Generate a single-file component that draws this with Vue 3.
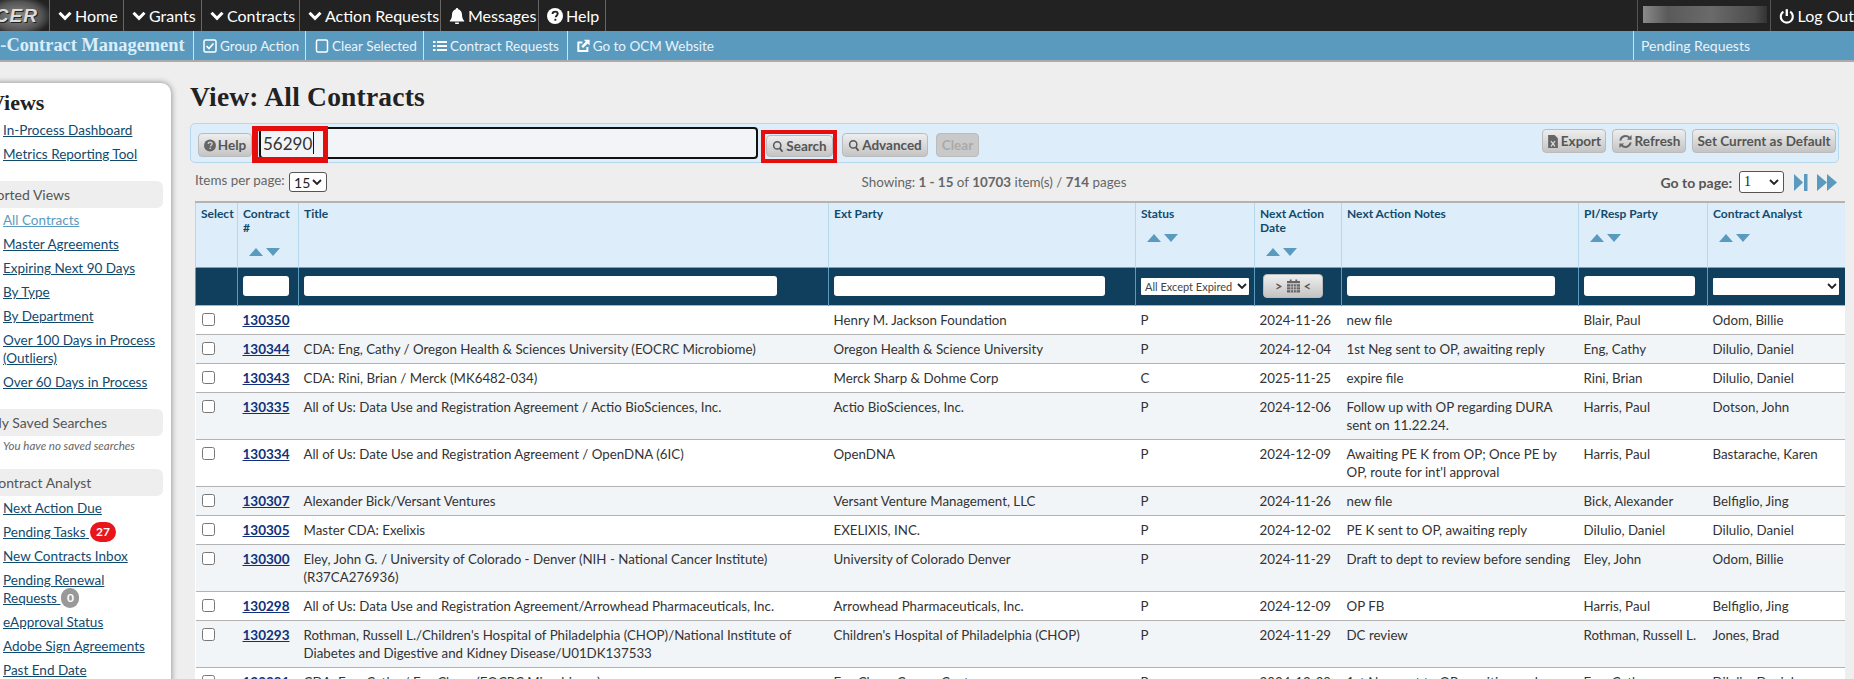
<script setup>
const navItems = [
  { label: 'Home', icon: 'chev', w: 74 },
  { label: 'Grants', icon: 'chev', w: 78 },
  { label: 'Contracts', icon: 'chev', w: 98 },
  { label: 'Action Requests', icon: 'chev', w: 141 },
  { label: 'Messages', icon: 'bell', w: 98 },
  { label: 'Help', icon: 'help', w: 67 }
]
const subItems = [
  { label: 'Group Action', icon: 'check', w: 112 },
  { label: 'Clear Selected', icon: 'square', w: 118 },
  { label: 'Contract Requests', icon: 'list', w: 144 },
  { label: 'Go to OCM Website', icon: 'ext', w: 147 }
]
const sideGroups = [
  { links: [{ t: 'In-Process Dashboard' }, { t: 'Metrics Reporting Tool' }] },
  {
    head: 'Sorted Views',
    links: [
      { t: 'All Contracts', active: true },
      { t: 'Master Agreements' },
      { t: 'Expiring Next 90 Days' },
      { t: 'By Type' },
      { t: 'By Department' },
      { t: 'Over 100 Days in Process (Outliers)' },
      { t: 'Over 60 Days in Process' }
    ]
  },
  { head: 'My Saved Searches', note: 'You have no saved searches', links: [] },
  {
    head: 'Contract Analyst',
    links: [
      { t: 'Next Action Due' },
      { t: 'Pending Tasks', badge: '27', red: true },
      { t: 'New Contracts Inbox' },
      { t: 'Pending Renewal Requests', badge: '0' },
      { t: 'eApproval Status' },
      { t: 'Adobe Sign Agreements' },
      { t: 'Past End Date' }
    ]
  }
]
const columns = [
  { t: 'Select', w: 42 },
  { t: 'Contract #', w: 61, sort: true, filter: 'contract' },
  { t: 'Title', w: 530, filter: 'title' },
  { t: 'Ext Party', w: 307, filter: 'party' },
  { t: 'Status', w: 119, sort: true, filter: 'status' },
  { t: 'Next Action Date', w: 87, sort: true, filter: 'date' },
  { t: 'Next Action Notes', w: 237, filter: 'notes' },
  { t: 'PI/Resp Party', w: 129, sort: true, filter: 'pi' },
  { t: 'Contract Analyst', w: 137, sort: true, filter: 'analyst' }
]
const rows = [
  ['130350', '', 'Henry M. Jackson Foundation', 'P', '2024-11-26', 'new file', 'Blair, Paul', 'Odom, Billie'],
  ['130344', 'CDA: Eng, Cathy / Oregon Health & Sciences University (EOCRC Microbiome)', 'Oregon Health & Science University', 'P', '2024-12-04', '1st Neg sent to OP, awaiting reply', 'Eng, Cathy', 'Dilulio, Daniel'],
  ['130343', 'CDA: Rini, Brian / Merck (MK6482-034)', 'Merck Sharp & Dohme Corp', 'C', '2025-11-25', 'expire file', 'Rini, Brian', 'Dilulio, Daniel'],
  ['130335', 'All of Us: Data Use and Registration Agreement / Actio BioSciences, Inc.', 'Actio BioSciences, Inc.', 'P', '2024-12-06', 'Follow up with OP regarding DURA sent on 11.22.24.', 'Harris, Paul', 'Dotson, John'],
  ['130334', 'All of Us: Date Use and Registration Agreement / OpenDNA (6IC)', 'OpenDNA', 'P', '2024-12-09', "Awaiting PE K from OP; Once PE by OP, route for int'l approval", 'Harris, Paul', 'Bastarache, Karen'],
  ['130307', 'Alexander Bick/Versant Ventures', 'Versant Venture Management, LLC', 'P', '2024-11-26', 'new file', 'Bick, Alexander', 'Belfiglio, Jing'],
  ['130305', 'Master CDA: Exelixis', 'EXELIXIS, INC.', 'P', '2024-12-02', 'PE K sent to OP, awaiting reply', 'DiIulio, Daniel', 'Dilulio, Daniel'],
  ['130300', 'Eley, John G. / University of Colorado - Denver (NIH - National Cancer Institute) (R37CA276936)', 'University of Colorado Denver', 'P', '2024-11-29', 'Draft to dept to review before sending', 'Eley, John', 'Odom, Billie'],
  ['130298', 'All of Us: Data Use and Registration Agreement/Arrowhead Pharmaceuticals, Inc.', 'Arrowhead Pharmaceuticals, Inc.', 'P', '2024-12-09', 'OP FB', 'Harris, Paul', 'Belfiglio, Jing'],
  ['130293', "Rothman, Russell L./Children's Hospital of Philadelphia (CHOP)/National Institute of Diabetes and Digestive and Kidney Disease/U01DK137533", "Children's Hospital of Philadelphia (CHOP)", 'P', '2024-11-29', 'DC review', 'Rothman, Russell L.', 'Jones, Brad'],
  ['130291', 'CDA: Eng, Cathy / Fox Chase (EOCRC Microbiome)', 'Fox Chase Cancer Center', 'P', '2024-12-09', '1st Neg sent to OP, awaiting reply', 'Eng, Cathy', 'Dilulio, Daniel']
]
</script>

<template>
  <div class="app">
    <header class="topbar">
      <div class="logo"><span class="logo-text">ICER</span></div>
      <a v-for="n in navItems" :key="n.label" class="nav" :style="{ width: n.w + 'px' }">
        <svg v-if="n.icon === 'chev'" class="ic-chev" viewBox="0 0 14 10"><path d="M1.500 1.800 7 7.300l5.500-5.500" fill="none" stroke="#fff" stroke-width="3"/></svg>
        <svg v-else-if="n.icon === 'bell'" class="ic" viewBox="0 0 16 16"><path d="M8 0a1.200 1.200 0 0 1 1.200 1.300C11.600 1.900 13 4 13 6.500c0 3.500 1 5 2.200 6.300v.7H.8v-.7C2 11.500 3 10 3 6.500 3 4 4.400 1.900 6.800 1.300A1.200 1.200 0 0 1 8 0zM6 14.500h4a2 2 0 0 1-4 0z" fill="#fff"/></svg>
        <svg v-else class="ic" viewBox="0 0 16 16"><circle cx="8" cy="8" r="8" fill="#fff"/><path d="M5.500 6c.1-1.500 1.200-2.400 2.600-2.400 1.500 0 2.600.9 2.600 2.200 0 1.800-2 1.900-2 3.400" fill="none" stroke="#222" stroke-width="1.900"/><rect x="7.400" y="10.800" width="1.900" height="1.900" fill="#222"/></svg>
        {{ n.label }}
      </a>
      <div class="user"><span class="blur"></span></div>
      <a class="nav logout">
        <svg class="ic" viewBox="0 0 16 16"><path d="M4.500 3.500a6.200 6.200 0 1 0 7 0" fill="none" stroke="#fff" stroke-width="2.200"/><path d="M8 1v7" stroke="#fff" stroke-width="2.400"/></svg>
        Log Out
      </a>
    </header>

    <nav class="subbar">
      <div class="brand">E-Contract Management</div>
      <a v-for="s in subItems" :key="s.label" class="sub" :style="{ width: s.w + 'px' }">
        <svg v-if="s.icon === 'check'" class="ic-s" viewBox="0 0 14 14"><rect x="1" y="1" width="12" height="12" rx="1.500" fill="none" stroke="#fff" stroke-width="1.500"/><path d="M3.500 7 6 9.500l4.500-5" fill="none" stroke="#fff" stroke-width="1.700"/></svg>
        <svg v-else-if="s.icon === 'square'" class="ic-s" viewBox="0 0 14 14"><rect x="1.500" y="1" width="11" height="12" rx="1.500" fill="none" stroke="#fff" stroke-width="1.500"/></svg>
        <svg v-else-if="s.icon === 'list'" class="ic-s" viewBox="0 0 14 14"><path d="M0 2h2.500v2H0zM0 6h2.500v2H0zM0 10h2.500v2H0zM4 2h10v2H4zM4 6h10v2H4zM4 10h10v2H4z" fill="#fff"/></svg>
        <svg v-else class="ic-s" viewBox="0 0 14 14"><path d="M11.500 8v4.500H1.500V3H6" fill="none" stroke="#fff" stroke-width="2.200"/><path d="M7.500 0H14v6.500l-2.200-2.200-5 5L4.700 7.200l5-5z" fill="#fff"/></svg>
        {{ s.label }}
      </a>
      <div class="sub pending">Pending Requests</div>
    </nav>

    <div class="page">
      <aside class="side">
        <h2 class="side-title">Views</h2>
        <section v-for="(g, i) in sideGroups" :key="i" class="side-group">
          <div v-if="g.head" class="side-head">{{ g.head }}</div>
          <div v-if="g.note" class="side-note">{{ g.note }}</div>
          <div v-for="l in g.links" :key="l.t" class="side-link">
            <a :class="{ active: l.active }">{{ l.t }}<template v-if="l.badge">&nbsp;</template></a><span v-if="l.badge" class="badge" :class="{ red: l.red }">{{ l.badge }}</span>
          </div>
        </section>
      </aside>

      <main class="main">
        <h1 class="title">View: All Contracts</h1>

        <div class="panel">
          <button class="btn help">
            <svg class="ic-b" viewBox="0 0 16 16"><circle cx="8" cy="8" r="8" fill="#666"/><path d="M5.500 6c.1-1.500 1.200-2.400 2.600-2.400 1.500 0 2.600.9 2.600 2.200 0 1.800-2 1.900-2 3.400" fill="none" stroke="#ccc" stroke-width="1.900"/><rect x="7.400" y="10.800" width="1.900" height="1.900" fill="#ccc"/></svg>
            Help
          </button>
          <div class="search-box">
            <div class="search-input"><span>56290</span><i class="caret"></i></div>
            <span class="mark"></span>
          </div>
          <div class="search-mark">
            <button class="btn">
              <svg class="ic-b" viewBox="0 0 16 16"><circle cx="7" cy="6.500" r="4.800" fill="none" stroke="#555" stroke-width="2"/><path d="m10.500 10.500 3.500 4.500" stroke="#555" stroke-width="2.400"/></svg>
              Search
            </button>
          </div>
          <button class="btn adv">
            <svg class="ic-b" viewBox="0 0 16 16"><circle cx="7" cy="6.500" r="4.800" fill="none" stroke="#555" stroke-width="2"/><path d="m10.500 10.500 3.500 4.500" stroke="#555" stroke-width="2.400"/></svg>
            Advanced
          </button>
          <button class="btn clear">Clear</button>
          <div class="panel-right">
            <button class="btn">
              <svg class="ic-b" viewBox="0 0 14 16"><path d="M1 0h8l4 4v12H1z" fill="#666"/><path d="M4.500 7.500 9.500 14M9.500 7.500l-5 6.500" stroke="#ddd" stroke-width="1.500"/></svg>
              Export
            </button>
            <button class="btn">
              <svg class="ic-b wide" viewBox="0 0 16 16"><path d="M2.500 7a5.600 5.600 0 0 1 9.700-3M13.500 9a5.600 5.600 0 0 1-9.700 3" fill="none" stroke="#666" stroke-width="2"/><path d="M14.500 1v5h-5zM1.500 15v-5h5z" fill="#666"/></svg>
              Refresh
            </button>
            <button class="btn">Set Current as Default</button>
          </div>
        </div>

        <div class="pager">
          <div class="pp">Items per page: <span class="sel sel-15">15<svg class="car" viewBox="0 0 10 6"><path d="M1 1l4 4 4-4" fill="none" stroke="#222" stroke-width="1.800"/></svg></span></div>
          <div class="showing">Showing: <b>1 - 15</b> of <b>10703</b> item(s) / <b>714</b> pages</div>
          <div class="goto">
            <b>Go to page:</b>
            <span class="sel sel-1">1<svg class="car" viewBox="0 0 10 6"><path d="M1 1l4 4 4-4" fill="none" stroke="#222" stroke-width="1.800"/></svg></span>
            <svg class="step" viewBox="0 0 14 17"><path d="M0 0l9 8.500-9 8.500zM10 0h3.500v17H10z" fill="#5b9abf"/></svg>
            <svg class="fast" viewBox="0 0 20 17"><path d="M0 0l10 8.500L0 17zM10 0l10 8.500L10 17z" fill="#5b9abf"/></svg>
          </div>
        </div>

        <table class="grid">
          <colgroup><col v-for="c in columns" :key="c.t" :style="{ width: c.w + 'px' }"></colgroup>
          <thead>
            <tr class="head-row">
              <th v-for="c in columns" :key="c.t">
                <div>{{ c.t }}</div>
                <div v-if="c.sort" class="sorts"><i class="up"></i><i class="down"></i></div>
              </th>
            </tr>
            <tr class="filter-row">
              <th v-for="c in columns" :key="c.t" :class="{ pad: c.filter }">
                <input v-if="['contract','title','party','notes','pi'].includes(c.filter)" class="f-input" :class="'f-' + c.filter" type="text">
                <span v-else-if="c.filter === 'status'" class="f-sel">All Except Expired<svg class="car" viewBox="0 0 10 6"><path d="M1 1l4 4 4-4" fill="none" stroke="#222" stroke-width="1.800"/></svg></span>
                <button v-else-if="c.filter === 'date'" class="f-date">&gt;
                  <svg class="cal" viewBox="0 0 14 14"><path d="M0 5h14v9H0zM0 1.500h3V0h2v1.500h4V0h2v1.500h3V4H0z" fill="#666"/><path d="M0 8h14M0 11h14M4 5v9M7 5v9M10 5v9" stroke="#ddd" stroke-width=".7"/></svg>
                  &lt;</button>
                <span v-else-if="c.filter === 'analyst'" class="f-sel f-an"><svg class="car" viewBox="0 0 10 6"><path d="M1 1l4 4 4-4" fill="none" stroke="#222" stroke-width="1.800"/></svg></span>
              </th>
            </tr>
          </thead>
          <tbody>
            <tr v-for="r in rows" :key="r[0]">
              <td><input class="cb" type="checkbox"></td>
              <td><a class="cid">{{ r[0] }}</a></td>
              <td v-for="(v, j) in r.slice(1)" :key="j">{{ v }}</td>
            </tr>
          </tbody>
        </table>
      </main>
    </div>
  </div>
</template>

<style>
html, body { margin: 0; height: 679px; overflow: hidden; background: #eee; }
</style>

<style scoped>
.app { font-family: "Lato", "Liberation Sans", sans-serif; font-size: 14px; color: #333; }
.topbar { display: flex; height: 31px; background: #222; color: #fff; }
.logo { display: flex; justify-content: flex-end; width: 50px; flex: none; overflow: hidden; padding-right: 11px; background: radial-gradient(ellipse 34px 20px at 18px 16px, #8c8c8c, #555 70%, #222 100%); border-right: 1px solid #666; box-sizing: border-box; white-space: nowrap; }
.logo-text { flex: none; font: italic bold 19px/32px "Liberation Sans", sans-serif; color: #dcdcdc; letter-spacing: 1px; text-shadow: 1px 1px 0 #222; }
.nav { display: flex; align-items: center; gap: 3px; box-sizing: border-box; padding-left: 8px; font-size: 16px; border-right: 1px solid #666; flex: none; white-space: nowrap; }
.ic-chev { width: 14px; height: 10px; }
.ic { width: 16px; height: 16px; }
.user { margin-left: auto; width: 134px; box-sizing: border-box; padding: 6px 0 0 5px; border-left: 1px solid #555; border-right: 1px solid #555; flex: none; }
.blur { display: block; width: 124px; height: 17px; background: linear-gradient(90deg, #8a8a8a, #5a5a5a 20%, #6a6a6a 55%, #4d4d4d 90%, #333); }
.logout { border: 0; width: 83px; padding-left: 8px; font-size: 16px; }
.subbar { display: flex; height: 31px; box-sizing: border-box; background: #5b9abf; border-bottom: 2px solid #aaa; color: #fff; }
.brand { width: 205px; flex: none; box-sizing: border-box; margin-left: -12px; font: bold 18.400px/29px "Liberation Serif", serif; color: #d9eefa; white-space: nowrap; }
.sub { display: flex; align-items: center; gap: 3px; flex: none; box-sizing: border-box; padding-left: 9px; border-left: 1px solid #cfe3ef; font-size: 13.500px; color: #e8f3fa; white-space: nowrap; }
.ic-s { width: 14px; height: 14px; }
.pending { margin-left: auto; width: 221px; padding-left: 7px; font-size: 14px; }
.page { display: flex; align-items: flex-start; }
.side { flex: none; width: 191px; margin: 21px 0 0 -20px; padding: 0 8px 10px 4px; box-sizing: border-box; background: #fff; border-radius: 10px; box-shadow: 0 0 6px rgba(0,0,0,.45); height: 620px; overflow: hidden; }
.side-title { margin: 0; padding: 8px 0 0 5px; font: bold 22px/24px "Liberation Serif", serif; color: #222; }
.side-group { margin-bottom: 15px; }
.side-group:first-of-type { margin-top: 3px; }
.side-head { height: 27px; padding-left: 5px; background: #eee; border-radius: 6px; font-size: 14px; line-height: 27px; color: #555; }
.side-note { margin-bottom: -1px; padding: 1px 0 0 19px; font-size: 11.500px; font-style: italic; line-height: 18px; color: #666; }
.side-link { height: auto; padding: 3px 0 3px 19px; font-size: 13.500px; line-height: 18px; }
.side-link a { color: #124a6c; text-decoration: underline; }
.side-link a.active { color: #5b9abf; }
.badge { display: inline-block; min-width: 18px; height: 20px; box-sizing: border-box; margin: -1px 0 -1px 1px; padding: 0 4px; border-radius: 10px; background: #999; color: #fff; font-weight: 700; font-size: 12px; line-height: 20px; text-align: center; vertical-align: top; }
.badge.red { background: #e8151b; width: 26px; }
.main { flex: none; width: 1664px; box-sizing: border-box; margin-left: 19px; padding-right: 15px; }
.title { margin: 21px 0 0; font: bold 27.500px/28px "Liberation Serif", serif; letter-spacing: .2px; color: #222; }
.panel { display: flex; align-items: center; height: 40px; box-sizing: border-box; margin-top: 12px; padding: 0 2px 0 7px; background: #ddeefa; border: 1px solid #b5d8ec; border-radius: 5px; position: relative; }
.btn { display: inline-flex; align-items: center; justify-content: center; gap: 2px; height: 24px; box-sizing: border-box; padding: 0 3px; font-family: inherit; font-size: 13.500px; font-weight: 700; color: #555; background: linear-gradient(#eee, #c4c4c4); border: 1px solid #bbb; border-radius: 4px; white-space: nowrap; }
.ic-b { width: 12px; height: 13px; flex: none; }
.ic-b.wide { width: 15px; height: 15px; }
.help { width: 54px; margin-top: 4px; flex: none; }
.search-box { position: relative; margin-left: 7px; flex: none; }
.search-input { display: flex; align-items: center; width: 499px; height: 32px; box-sizing: border-box; padding-left: 2px; background: #f1f5f8; border: 2px solid #111; border-radius: 4px; font-size: 17px; color: #333; }
.caret { display: block; width: 1px; height: 22px; margin-left: 1px; background: #111; }
.mark { position: absolute; left: -7px; top: -1px; width: 76px; height: 37px; box-sizing: border-box; border: solid #e60d0d; border-width: 5px 5px 6px 6px; pointer-events: none; }
.search-mark { flex: none; display: flex; align-items: flex-start; width: 76px; height: 33px; box-sizing: border-box; margin: 7px 0 0 3px; padding: 1px 0 0 1px; border: 4px solid #e60d0d; }
.search-mark .btn { width: 67px; height: 22px; }
.adv { width: 86px; margin: 4px 0 0 5px; flex: none; }
.clear { width: 43px; margin: 4px 0 0 8px; flex: none; color: #aaa; background: #c9c9c9; }
.panel-right { margin-left: auto; display: flex; gap: 6px; margin-top: -4px; }
.panel-right .btn:nth-child(1) { width: 64px; }
.panel-right .btn:nth-child(2) { width: 74px; }
.panel-right .btn:nth-child(3) { width: 144px; }
.pager { display: grid; grid-template-columns: 1fr auto 1fr; align-items: center; height: 38px; margin-left: 5px; font-size: 13.400px; color: #666; }
.showing { margin-right: 46px; }
.sel { display: inline-flex; align-items: center; justify-content: space-between; box-sizing: border-box; height: 20px; padding: 0 4px; background: #fff; border: 1px solid #555; border-radius: 3px; color: #222; font-size: 14px; vertical-align: middle; }
.car { width: 10px; height: 6px; flex: none; }
.sel-15 { width: 38px; margin-left: 1px; }
.sel-1 { width: 45px; height: 22px; margin: 0 6px 0 7px; font-family: "Liberation Serif", serif; }
.goto { display: flex; align-items: center; justify-content: flex-end; padding-right: 2px; font-size: 14px; color: #555; }
.step { width: 14px; height: 17px; margin-right: 9px; margin-left: 4px; }
.fast { width: 20px; height: 17px; }
.grid { table-layout: fixed; width: 1649px; margin-left: 5px; border-collapse: collapse; background: #fff; border-top: 2px solid #b3b3b3; }
.head-row th { height: 65px; box-sizing: border-box; padding: 4px 5px 0; background: #ddeefa; border-left: 1px solid #b5d8ec; color: #124a6c; font-size: 12px; font-weight: 700; line-height: 14px; text-align: left; vertical-align: top; }
.head-row th:first-child { padding-left: 5px; white-space: nowrap; padding-right: 0; }
.sorts { display: flex; gap: 3px; margin: 13px 0 0 6px; }
.sorts i { display: block; width: 0; height: 0; border-left: 7px solid transparent; border-right: 7px solid transparent; }
.sorts .up { border-bottom: 8px solid #5b9abf; }
.sorts .down { border-top: 8px solid #5b9abf; }
.filter-row th { height: 37px; padding: 0 5px; background: #0f3f5c; border-left: 1px solid #5b9abf; border-top: 1px solid #999; text-align: left; vertical-align: middle; }
.f-input { display: block; height: 20px; box-sizing: border-box; padding: 0; background: #fff; border: 0; border-radius: 3px; }
.f-contract { width: 46px; }
.f-title { width: 473px; }
.f-party { width: 271px; }
.f-notes { width: 208px; }
.f-pi { width: 111px; }
.f-sel { display: flex; align-items: center; justify-content: space-between; height: 17px; box-sizing: border-box; padding: 0 2px 0 4px; background: #fff; border-radius: 1px; font-size: 11px; font-weight: 400; color: #444; white-space: nowrap; }
.f-an { width: 126px; justify-content: flex-end; }
.f-date { display: flex; align-items: center; justify-content: center; gap: 4px; width: 60px; height: 24px; margin-left: 3px; padding: 0; background: linear-gradient(#eee, #c4c4c4); border: 1px solid #bbb; border-radius: 4px; color: #555; font-family: inherit; font-size: 13px; font-weight: 700; }
.cal { width: 13px; height: 14px; }
tbody td { padding: 5px 3px 5px 5px; border-top: 1px solid #b3b3b3; line-height: 18px; color: #333; vertical-align: top; font-size: 13.300px; }
tbody tr:nth-child(even) td { background: #f1f5f8; }
tbody td:first-child { padding: 0 0 0 6px; }
.cb { display: block; width: 13px; height: 13px; margin: 7px 0 0; appearance: none; background: #fff; border: 1px solid #777; border-radius: 2.500px; }
.cid { color: #12307a; font-weight: 700; text-decoration: underline; font-size: 13.500px; }
</style>
